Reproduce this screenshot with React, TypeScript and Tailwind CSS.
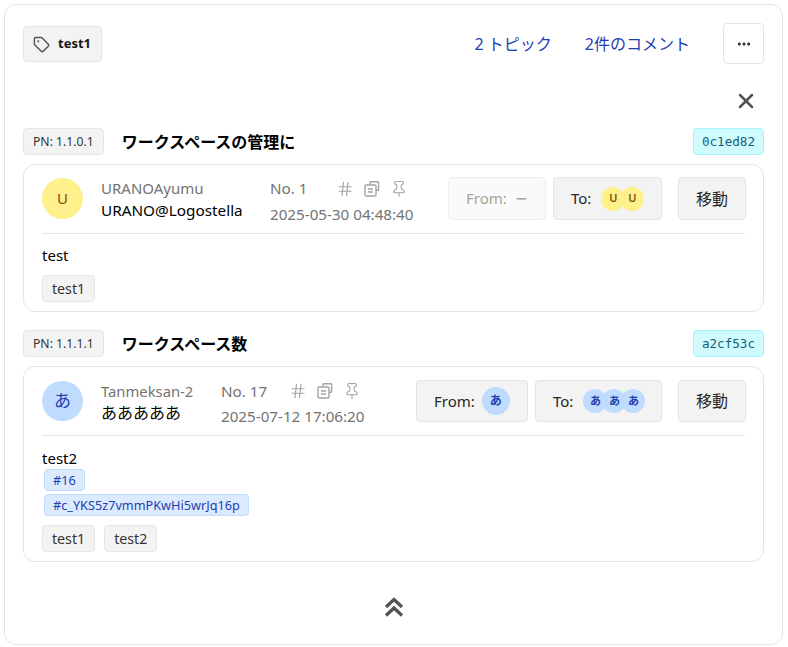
import type { ReactNode } from "react";
import { Ellipsis, Tag, X, Hash, Pin } from "lucide-react";

const font = "font-['Noto_Sans','Noto_Sans_CJK_JP',sans-serif]";
const btn = "flex items-center rounded border border-[#e5e5e5] bg-[#f3f3f3] text-[15px] text-[#262626]";
const zOrder = ["z-30", "z-20", "z-10"];

const Small = ({ items, tone }: { items: string[]; tone: "y" | "b" }) => (
  <span className="flex items-center">
    {items.map((ch, i) => (
      <span
        key={i}
        className={`relative -ml-[5px] first:ml-0 flex h-6 w-6 items-center justify-center rounded-full text-[11px] font-semibold ${zOrder[i]} ${
          tone === "y" ? "bg-[#fef08a] text-[#854d0e]" : "bg-[#bfdbfe] text-[#1e40af]"
        }`}
      >
        {ch}
      </span>
    ))}
  </span>
);

const Chip = ({ children }: { children: ReactNode }) => (
  <span className="inline-block rounded border border-[#e5e5e5] bg-[#f3f3f3] px-[9px] text-[14.2px] leading-[25px] text-[#333]">
    {children}
  </span>
);

const CopyIcon = () => (
  <svg width="18" height="18" viewBox="0 0 18 18" fill="none" stroke="currentColor" strokeWidth="1.4">
    <path d="M7 4.5V2.5a.8.8 0 0 1 .8-.8h7a.8.8 0 0 1 .8.8v7a.8.8 0 0 1-.8.8H13" />
    <rect x="2" y="5" width="11" height="11" rx="1.2" />
    <path d="M5 9h5M5 12h5" />
  </svg>
);

const Meta = ({ no, date, noWidth }: { no: string; date: string; noWidth: string }) => (
  <div className="h-[42px] text-[15.2px] text-[#737373]">
    <div className="flex h-[22px] items-center">
      <span className={noWidth}>{no}</span>
      <span className="flex items-center gap-[9px] text-[#a3a3a3]">
        <Hash size={18} strokeWidth={1.5} />
        <CopyIcon />
        <Pin size={18} strokeWidth={1.5} />
      </span>
    </div>
    <div className="mt-[3px] leading-[22px] whitespace-nowrap">{date}</div>
  </div>
);

const Heading = ({ pn, title, hash }: { pn: string; title: string; hash: string }) => (
  <div className="flex items-center">
    <span className="rounded border border-[#e5e5e5] bg-[#f3f3f3] px-[9px] text-[12.2px] leading-[25px] text-[#333]">{pn}</span>
    <span className="ml-[18px] text-[16px] font-bold text-black">{title}</span>
    <span className="ml-auto rounded border border-[#a5f3fc] bg-[#cffafe] px-2 font-['DejaVu_Sans_Mono',monospace] text-[12.6px] leading-[25px] text-[#155e75]">
      {hash}
    </span>
  </div>
);

export default function App() {
  return (
    <div className={`${font} h-[647px] bg-white p-1`}>
      <div className="flex h-[641px] w-[779px] flex-col rounded-xl border border-[#e5e5e5] px-[18px] pt-[18px]">
        <div className="flex items-start justify-between">
          <span className="mt-[3px] flex h-9 items-center gap-2 rounded border border-[#e5e5e5] bg-[#f3f3f3] pr-[10px] pl-[9px] text-[13px] font-bold text-[#171717]">
            <Tag size={17} className="text-[#525252]" />
            test1
          </span>
          <div className="flex items-center text-[16px] text-[#1e40af]">
            <span>2 トピック</span>
            <span className="ml-[33px]">2件のコメント</span>
            <span className="ml-[33px] flex h-[41px] w-[41px] items-center justify-center rounded border border-[#e5e5e5] text-[#262626]">
              <Ellipsis size={16} strokeWidth={2.5} />
            </span>
          </div>
        </div>

        <div className="mt-[25px] flex justify-end pr-[6px] text-[#525252]">
          <X size={24} strokeWidth={2.5} />
        </div>

        <div className="mt-[15px]">
          <Heading pn="PN: 1.1.0.1" title="ワークスペースの管理に" hash="0c1ed82" />
          <div className="mt-[9px] rounded-xl border border-[#e5e5e5] px-[18px] pt-[12px] pb-[9px]">
            <div className="flex items-center border-b border-[#e5e5e5] pb-[13px]">
              <span className="flex h-[41px] w-[41px] shrink-0 items-center justify-center rounded-full bg-[#fef08a] text-[15px] text-[#854d0e]">U</span>
              <div className="ml-[18px] h-[43px] w-[169px] shrink-0">
                <div className="text-[15px] leading-[22px] text-[#737373]">URANOAyumu</div>
                <div className="text-[15.3px] leading-[22px] whitespace-nowrap text-black">URANO@Logostella</div>
              </div>
              <Meta no="No. 1" date="2025-05-30 04:48:40" noWidth="w-[66px]" />
              <div className="-mr-px ml-auto flex items-center">
                <span className="flex h-[43px] w-[98px] items-center gap-[9px] rounded border border-[#eee] bg-[#fafafa] pl-[17px] text-[15px] text-[#a3a3a3]">
                  From: <span className="text-[20px] leading-none">−</span>
                </span>
                <span className={`${btn} ml-[7px] h-[43px] w-[109px] gap-[10px] pl-[17px]`}>
                  To: <Small items={["U", "U"]} tone="y" />
                </span>
                <span className={`${btn} ml-4 h-[43px] w-[68px] justify-center text-[16px]`}>移動</span>
              </div>
            </div>
            <div className="mt-[10px] text-[15px] leading-[22px] text-black">test</div>
            <div className="mt-[9px] flex">
              <Chip>test1</Chip>
            </div>
          </div>
        </div>

        <div className="mt-[18px]">
          <Heading pn="PN: 1.1.1.1" title="ワークスペース数" hash="a2cf53c" />
          <div className="mt-[9px] rounded-xl border border-[#e5e5e5] px-[18px] pt-[13px] pb-[9px]">
            <div className="flex items-center border-b border-[#e5e5e5] pb-[13px]">
              <span className="flex h-10 w-[41px] shrink-0 items-center justify-center rounded-full bg-[#bfdbfe] text-[17px] text-[#1e40af]">あ</span>
              <div className="ml-[18px] h-[42px] w-[120px] shrink-0">
                <div className="text-[14.8px] leading-[22px] text-[#737373]">Tanmeksan-2</div>
                <div className="text-[16px] leading-[22px] text-black">あああああ</div>
              </div>
              <Meta no="No. 17" date="2025-07-12 17:06:20" noWidth="w-[68px]" />
              <div className="-mr-px ml-auto flex items-center">
                <span className={`${btn} h-[42px] w-[112px] gap-[7px] pl-[17px]`}>
                  From:
                  <span className="flex h-7 w-7 items-center justify-center rounded-full bg-[#bfdbfe] text-[12px] font-semibold text-[#1e40af]">あ</span>
                </span>
                <span className={`${btn} ml-[7px] h-[42px] w-[127px] gap-[10px] pl-[17px]`}>
                  To: <Small items={["あ", "あ", "あ"]} tone="b" />
                </span>
                <span className={`${btn} ml-4 h-[42px] w-[68px] justify-center text-[16px]`}>移動</span>
              </div>
            </div>
            <div className="mt-[11px] text-[15px] leading-[22px] text-black">test2</div>
            <div className="ml-[2px] flex flex-col items-start gap-[3px]">
              <span className="rounded border border-[#bfdbfe] bg-[#dbeafe] px-2 text-[12.7px] leading-[20px] text-[#1e40af]">#16</span>
              <span className="rounded border border-[#bfdbfe] bg-[#dbeafe] px-2 text-[12.7px] leading-[20px] text-[#1e40af]">#c_YKS5z7vmmPKwHi5wrJq16p</span>
            </div>
            <div className="mt-[9px] flex gap-[9px]">
              <Chip>test1</Chip>
              <Chip>test2</Chip>
            </div>
          </div>
        </div>

        <div className="mt-[35px] flex justify-center text-[#525252]">
          <svg width="20" height="20" viewBox="0 0 20 20" fill="none" stroke="currentColor" strokeWidth="3.2">
            <path d="M2 10l8-7.5 8 7.5M2 18.5l8-7.5 8 7.5" />
          </svg>
        </div>
      </div>
    </div>
  );
}
